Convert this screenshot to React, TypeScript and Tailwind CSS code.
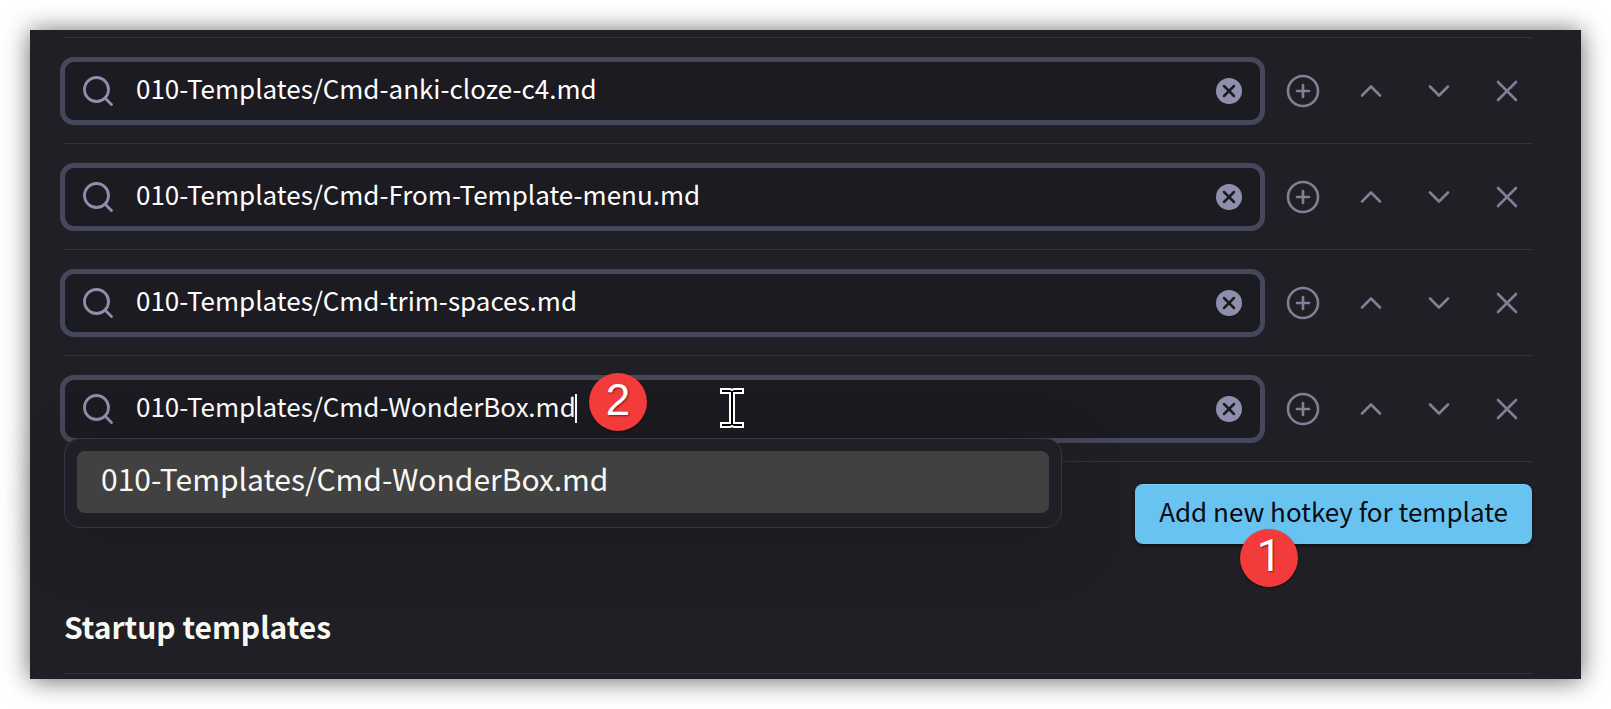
import { useState } from "react";
import { ChevronDown, ChevronUp, CirclePlus, Search, X } from "lucide-react";

const initialTemplates = [
  "010-Templates/Cmd-anki-cloze-c4.md",
  "010-Templates/Cmd-From-Template-menu.md",
  "010-Templates/Cmd-trim-spaces.md",
  "010-Templates/Cmd-WonderBox.md",
];

const actions = [
  { label: "Configure hotkey", Icon: CirclePlus },
  { label: "Move up", Icon: ChevronUp },
  { label: "Move down", Icon: ChevronDown },
  { label: "Delete", Icon: X },
];

function StepBadge({ step, className }: { step: number; className: string }) {
  return (
    <span
      className={`absolute z-20 flex size-[58px] items-center justify-center rounded-full bg-[#f33b3b] pb-1 text-[44px] leading-none text-white shadow-[0_1px_2px_rgba(0,0,0,0.6)] [text-shadow:1px_1px_2px_rgba(0,0,0,0.5)] ${className}`}
    >
      {step}
    </span>
  );
}

function TextCursor() {
  return (
    <svg
      viewBox="0 0 24 40"
      className="pointer-events-none absolute top-2 left-[655px] z-20 h-10 w-6"
      aria-hidden="true"
    >
      <path
        d="M1 1H10L12 2L14 1H23V5H14V35H23V39H14L12 38L10 39H1V35H10V5H1Z"
        fill="#000"
        stroke="#fff"
        strokeWidth="2"
      />
    </svg>
  );
}

function Suggestions({ items }: { items: string[] }) {
  return (
    <ul className="absolute top-[58px] -left-px z-10 w-[998px] rounded-2xl border border-[#363648] bg-[#201f25] px-3 pt-3 pb-[14px] shadow-[0_16px_64px_rgba(10,20,20,0.3)]">
      {items.map((item) => (
        <li key={item}>
          <button
            type="button"
            className="block w-full rounded-lg bg-[#414141] px-6 pt-[5px] pb-[13px] text-left text-[30px] leading-[44px] text-[#f8f8f2]"
          >
            {item}
          </button>
        </li>
      ))}
    </ul>
  );
}

function TemplateRow({
  value,
  index,
  active,
  onChange,
}: {
  value: string;
  index: number;
  active: boolean;
  onChange: (value: string) => void;
}) {
  const id = `template-${index}`;
  return (
    <div className="flex items-center gap-[13px] border-t border-[#33323f] pt-[19px] pb-[18px]">
      <div className="relative -ml-1 flex h-[68px] min-w-0 flex-1 items-center rounded-[14px] border-5 border-[#45475a] bg-[#1c1b21] pr-[18px] pl-[15px]">
        <label htmlFor={id} aria-label="Template file" className="shrink-0">
          <Search className="size-9 text-[#8e8fac]" strokeWidth={1.9} aria-hidden="true" />
        </label>
        <input
          id={id}
          type="text"
          value={value}
          onChange={(event) => onChange(event.target.value)}
          className="ml-5 h-full min-w-0 flex-1 bg-transparent pb-2 text-[26px] text-white outline-none"
        />
        <button
          type="button"
          aria-label="Clear"
          onClick={() => onChange("")}
          className="flex size-[26px] shrink-0 items-center justify-center rounded-full bg-[#8e8fac] text-[#1c1b21]"
        >
          <X className="size-5" strokeWidth={3} aria-hidden="true" />
        </button>
        {active && (
          <>
            <span className="absolute top-[14px] left-[510px] h-[29px] w-[2px] bg-white" />
            <StepBadge step={2} className="-top-[7px] left-[524px] font-['Liberation_Sans',sans-serif]" />
            <TextCursor />
            <Suggestions items={[value]} />
          </>
        )}
      </div>
      <div className="flex gap-[18px]">
        {actions.map(({ label, Icon }) => (
          <button
            key={label}
            type="button"
            aria-label={label}
            className="flex h-[50px] w-[50px] items-center justify-center text-[#7f7f96]"
          >
            <Icon className="size-9" strokeWidth={1.75} aria-hidden="true" />
          </button>
        ))}
      </div>
    </div>
  );
}

export default function App() {
  const [templates, setTemplates] = useState(initialTemplates);

  return (
    <div className="min-h-screen bg-white p-[30px] font-['Noto_Sans_CJK_SC',sans-serif]">
      <main className="bg-[#201f25] pt-[7px] pr-[49px] pb-[5px] pl-[34px] shadow-[0_1px_24px_rgba(0,0,0,0.6)]">
        {templates.map((value, index) => (
          <TemplateRow
            key={index}
            index={index}
            value={value}
            active={index === templates.length - 1}
            onChange={(next) =>
              setTemplates((current) => current.map((item, i) => (i === index ? next : item)))
            }
          />
        ))}
        <div className="flex justify-end border-t border-[#33323f] pt-[22px]">
          <div className="relative">
            <button
              type="button"
              className="h-[60px] rounded-lg bg-[#68c3f0] px-6 pb-2 text-[26px] text-[#0b0b12] shadow-[0_2px_4px_rgba(0,0,0,0.5),inset_0_1px_1px_rgba(255,255,255,0.15)]"
            >
              Add new hotkey for template
            </button>
            <StepBadge step={1} className="top-[45px] left-[105px] font-[Roboto,sans-serif]" />
          </div>
        </div>
        <h2 className="mt-[58px] border-b border-[#33323f] pb-[23px] text-[30px] leading-[48px] font-bold text-[#f8f8f2]">
          Startup templates
        </h2>
      </main>
    </div>
  );
}
